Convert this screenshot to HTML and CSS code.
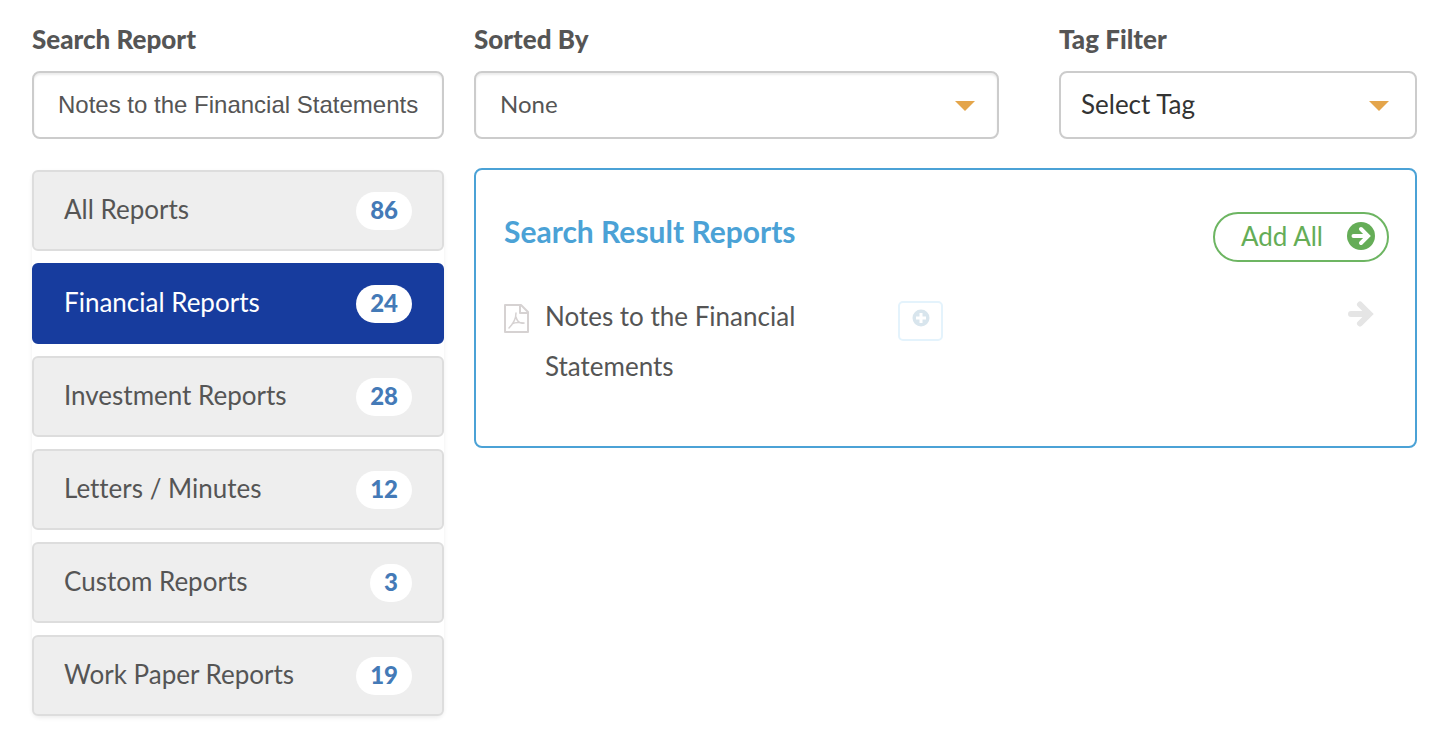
FILE: index.html
```html
<!DOCTYPE html>
<html lang="en">
<head>
<meta charset="UTF-8">
<meta name="viewport" content="width=device-width, initial-scale=1.0">
<title>Reports</title>
<link rel="stylesheet" href="styles.css">
</head>
<body>

<div class="reports">
  <aside class="sidebar">
    <div class="field">
      <label for="search">Search Report</label>
      <input type="text" id="search" class="control search" value="Notes to the Financial Statements">
    </div>

    <nav class="report-list">
      <a href="#" class="report-link">All Reports <span class="badge">86</span></a>
      <a href="#" class="report-link active">Financial Reports <span class="badge">24</span></a>
      <a href="#" class="report-link">Investment Reports <span class="badge">28</span></a>
      <a href="#" class="report-link">Letters / Minutes <span class="badge">12</span></a>
      <a href="#" class="report-link">Custom Reports <span class="badge">3</span></a>
      <a href="#" class="report-link">Work Paper Reports <span class="badge">19</span></a>
    </nav>
  </aside>

  <main class="content">
    <div class="filters">
      <div class="field">
        <label for="sort">Sorted By</label>
        <div class="select">
          <select id="sort" class="control sort">
            <option>None</option>
          </select>
        </div>
      </div>
      <div class="field">
        <label for="tag">Tag Filter</label>
        <div class="select select-tag">
          <select id="tag" class="control tag">
            <option>Select Tag</option>
          </select>
        </div>
      </div>
    </div>

    <section class="panel">
      <div class="panel-header">
        <h2>Search Result Reports</h2>
        <button type="button" class="add-all">
          Add All
          <svg width="28" height="28" viewBox="0 0 28 28">
            <circle cx="14" cy="14" r="14" fill="#65ad57"/>
            <path d="M6.500 14H20M14 7l7 7-7 7" fill="none" stroke="#fff" stroke-width="4" stroke-linecap="round" stroke-linejoin="miter"/>
          </svg>
        </button>
      </div>

      <div class="result">
        <svg class="pdf" width="25" height="29" viewBox="0 0 25 29" fill="none" stroke="#d6d2d2" stroke-width="2" stroke-linejoin="round">
          <path d="M1 1h16l7 7v20H1z"/>
          <path d="M16 1v8h8"/>
          <path d="M12 9c0 5-1 9-7 15M12 13c1 4 3 7 8 6M8 20c3-2 7-2 12-1" stroke-width="1.5" stroke-linecap="round"/>
        </svg>
        <p class="result-name">Notes to the Financial Statements</p>
        <button type="button" class="add" aria-label="Add">
          <svg width="18" height="18" viewBox="0 0 18 18">
            <circle cx="9" cy="9" r="8.5" fill="#d8e5ed"/>
            <path d="M9 4v10M4 9h10" stroke="#fff" stroke-width="3"/>
          </svg>
        </button>
        <button type="button" class="move" aria-label="Move">
          <svg width="26" height="26" viewBox="0 0 26 26">
            <path d="M3 13H20M12 3.500l9.500 9.500-9.500 9.500" fill="none" stroke="#e5e5e5" stroke-width="6" stroke-linecap="round" stroke-linejoin="miter"/>
          </svg>
        </button>
      </div>
    </section>
  </main>
</div>

</body>
</html>
```
FILE: styles.css
```css
* {
  box-sizing: border-box;
}
body {
  margin: 0;
  font-family: Lato, "Open Sans", sans-serif;
  font-size: 26px;
  font-variant-ligatures: none;
  color: #555;
  background-color: #fff;
}
button {
  font: inherit;
  cursor: pointer;
}
.reports {
  display: grid;
  grid-template-columns: 412px 1fr;
  gap: 30px;
  align-items: start;
  padding: 23px 23px 40px 32px;
}

/* form fields */
.field label {
  display: block;
  margin-bottom: 16px;
  font-size: 26px;
  font-weight: 900;
  line-height: 32px;
}
.control {
  display: block;
  width: 100%;
  height: 68px;
  border: 2px solid #ccc;
  border-radius: 8px;
  background-color: #fff;
  color: #555;
  font-family: inherit;
  font-size: 24px;
}
.search {
  padding: 0 24px;
  font-family: "Liberation Sans", Arial, sans-serif;
  box-shadow: inset 0 2px 2px rgba(0,0,0,0.075);
}
.select {
  position: relative;
}
.select::after {
  content: "";
  position: absolute;
  top: 30px;
  right: 24px;
  border: 10px solid transparent;
  border-top-color: #e4a54b;
  border-bottom: none;
  pointer-events: none;
}
.select-tag::after {
  right: 28px;
}
.select select {
  appearance: none;
}
.sort {
  padding: 0 24px 4px;
  box-shadow: inset 0 2px 2px rgba(0,0,0,0.075);
}
.tag {
  padding: 0 20px 2px;
  font-size: 26px;
  color: #333;
}
.filters {
  display: grid;
  grid-template-columns: 525fr 358fr;
  gap: 60px;
}

/* report categories */
.report-list {
  display: flex;
  flex-direction: column;
  gap: 12px;
  margin-top: 31px;
  border-radius: 8px;
  box-shadow: 0 2px 4px rgba(0,0,0,0.075);
}
.report-link {
  display: flex;
  justify-content: space-between;
  align-items: flex-start;
  padding: 20px 30px 19px;
  border: 2px solid #ddd;
  border-radius: 6px;
  background-color: #eee;
  color: #555;
  line-height: 35px;
  text-decoration: none;
}
.report-link.active {
  border-color: #173c9e;
  background-color: #173c9e;
  color: #fff;
}
.badge {
  padding: 0 14px 3px;
  border-radius: 20px;
  background-color: #fff;
  color: #447ab7;
  font-size: 24px;
  font-weight: 900;
}

/* search results */
.panel {
  margin-top: 29px;
  padding: 42px 26px 55px 28px;
  border: 2px solid #4ba2d6;
  border-radius: 8px;
}
.panel-header {
  display: flex;
  justify-content: space-between;
}
.panel h2 {
  margin: 0;
  font-size: 30px;
  line-height: 38px;
  color: #4ba2d6;
}
.add-all {
  display: flex;
  align-items: center;
  gap: 24px;
  height: 50px;
  padding: 0 12px 2px 26px;
  border: 2px solid #6db562;
  border-radius: 25px;
  background: none;
  color: #65ad57;
}
.result {
  display: flex;
  align-items: flex-start;
  margin-top: 29px;
}
.result-name {
  flex: 0 0 320px;
  margin: 0 33px 0 16px;
  line-height: 50px;
}
.pdf {
  flex: none;
  margin-top: 13px;
}
.add {
  width: 45px;
  height: 40px;
  margin-top: 10px;
  padding: 0 0 6px;
  border: 2px solid #e4f3fc;
  border-radius: 5px;
  background: none;
  line-height: 0;
}
.move {
  margin: 10px 15px 0 auto;
  padding: 0;
  border: none;
  background: none;
  line-height: 0;
}
```
